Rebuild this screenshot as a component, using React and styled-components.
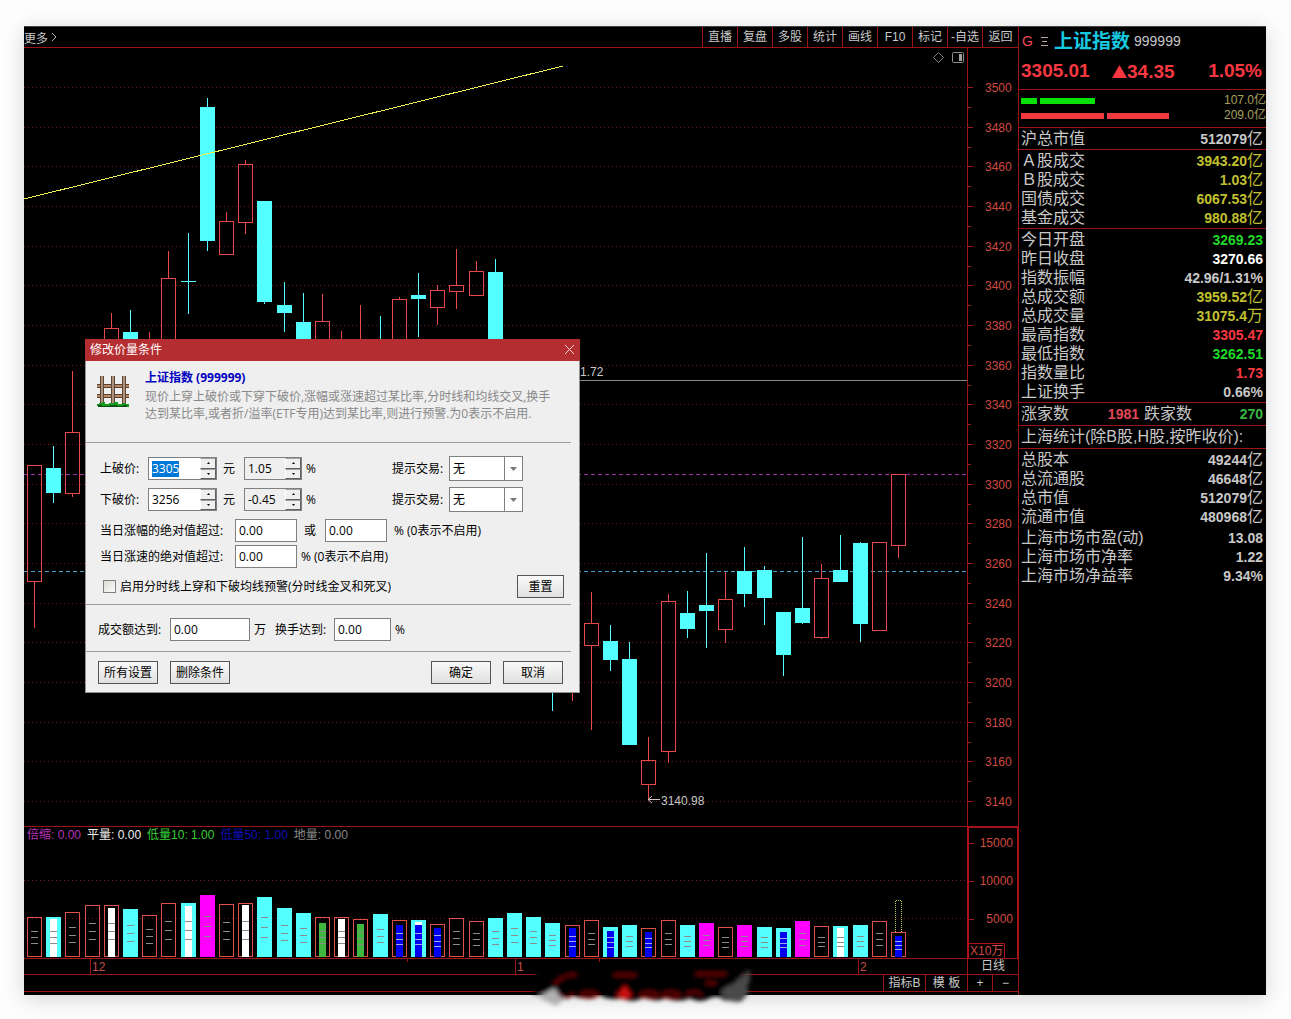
import React, { useEffect, useRef } from 'react';
import styled, { createGlobalStyle } from 'styled-components';

const GlobalStyle = createGlobalStyle`
  *, *::before, *::after {
    box-sizing: border-box;
  }

  body {
    margin: 0;
    background: #fdfdfd;
    font-family: 'Liberation Sans', 'Noto Sans CJK SC', sans-serif;
    font-size: 12px;
  }

  button, input, select {
    font: inherit;
    color: inherit;
  }
`;

const LINE = '#9c1414';

// [direction, high, top, bottom, low]
const candles = [
  ['up', 417, 417, 534, 580],
  ['down', 398, 420, 445, 455],
  ['up', 323, 384, 446, 449],
  ['up', 306, 310, 380, 380],
  ['up', 265, 280, 330, 340],
  ['down', 262, 284, 330, 340],
  ['up', 284, 300, 330, 340],
  ['up', 203, 230, 330, 340],
  ['down', 185, 233, 233, 266],
  ['down', 50, 59, 193, 203],
  ['up', 164, 173, 207, 207],
  ['up', 112, 116, 175, 186],
  ['down', 153, 153, 254, 256],
  ['down', 234, 257, 265, 284],
  ['down', 245, 274, 330, 340],
  ['up', 246, 273, 330, 340],
  ['up', 283, 310, 330, 340],
  ['up', 257, 310, 330, 340],
  ['down', 268, 310, 330, 340],
  ['up', 249, 251, 330, 340],
  ['down', 225, 247, 251, 289],
  ['up', 237, 242, 260, 277],
  ['up', 201, 237, 244, 261],
  ['up', 213, 223, 248, 248],
  ['down', 211, 224, 330, 340],
  ['down', 330, 340, 420, 430],
  ['up', 400, 420, 500, 520],
  ['down', 500, 520, 600, 663],
  ['up', 500, 520, 600, 653],
  ['up', 544, 575, 598, 682],
  ['down', 577, 593, 612, 623],
  ['down', 594, 611, 697, 697],
  ['up', 689, 712, 737, 752],
  ['up', 546, 553, 704, 715],
  ['down', 543, 565, 581, 590],
  ['down', 505, 557, 563, 600],
  ['up', 524, 551, 582, 595],
  ['down', 499, 523, 546, 559],
  ['down', 518, 522, 550, 577],
  ['down', 564, 564, 607, 628],
  ['down', 489, 560, 575, 576],
  ['up', 516, 530, 590, 591],
  ['down', 487, 522, 534, 534],
  ['down', 494, 495, 576, 594],
  ['up', 494, 494, 583, 583],
  ['up', 426, 426, 498, 510],
];

// [kind, height, inner colour, inner height, cap colour]
const volumes = [
  ['up', 40], ['down', 40, '#fff', 38], ['up', 45], ['up', 52], ['up', 52, '#fff', 49],
  ['down', 48], ['up', 42], ['up', 54], ['down', 54, '#fff', 51], ['hot', 62],
  ['up', 53], ['up', 54, '#fff', 52], ['down', 60], ['down', 49], ['down', 44],
  ['up', 40, '#40b840', 34], ['up', 40, '#fff', 38], ['up', 38, '#40b840', 33], ['down', 43], ['up', 37, '#0000f0', 32],
  ['down', 37, '#0000f0', 32, '#fff'], ['up', 33, '#0000f0', 29], ['up', 39], ['up', 36], ['down', 39],
  ['down', 44], ['down', 40], ['down', 34], ['up', 32, '#0000f0', 29], ['up', 37],
  ['down', 30, '#0000f0', 26], ['down', 32], ['up', 29, '#0000f0', 25], ['up', 37], ['down', 32],
  ['hot', 34], ['up', 30], ['hot', 32], ['down', 30], ['down', 29, '#0000f0', 25],
  ['hot', 36], ['up', 31], ['down', 31, '#fff', 29], ['down', 32], ['up', 36], ['up', 25, '#0000f0', 21],
];

const prices = Array.from({ length: 19 }, (_, i) => ({
  price: 3500 - i * 20,
  y: Math.round(39 + i * 39.67),
}));

const menu = ['直播', '复盘', '多股', '统计', '画线', 'F10', '标记', '-自选', '返回'];

const legend = [
  ['倍缩: 0.00', '#b832b8'],
  ['平量: 0.00', '#f0f0f0'],
  ['低量10: 1.00', '#38d038'],
  ['低量50: 1.00', '#1010b8'],
  ['地量: 0.00', '#888'],
];

const quoteSections = [
  [['沪总市值', '512079', '亿', '#c8c8c8']],
  [
    ['Ａ股成交', '3943.20', '亿', '#c0c030'],
    ['Ｂ股成交', '1.03', '亿', '#c0c030'],
    ['国债成交', '6067.53', '亿', '#c0c030'],
    ['基金成交', '980.88', '亿', '#c0c030'],
  ],
  [
    ['今日开盘', '3269.23', '', '#20d828'],
    ['昨日收盘', '3270.66', '', '#fff'],
    ['指数振幅', '42.96/1.31%', '', '#c8c8c8'],
    ['总成交额', '3959.52', '亿', '#c0c030'],
    ['总成交量', '31075.4', '万', '#c0c030'],
    ['最高指数', '3305.47', '', '#f83840'],
    ['最低指数', '3262.51', '', '#20d828'],
    ['指数量比', '1.73', '', '#f83840'],
    ['上证换手', '0.66%', '', '#c8c8c8'],
  ],
];

const capital = [
  ['总股本', '49244', '亿', '#c8c8c8'],
  ['总流通股', '46648', '亿', '#c8c8c8'],
  ['总市值', '512079', '亿', '#c8c8c8'],
  ['流通市值', '480968', '亿', '#c8c8c8'],
];

const ratios = [
  ['上海市场市盈(动)', '13.08', '', '#c8c8c8'],
  ['上海市场市净率', '1.22', '', '#c8c8c8'],
  ['上海市场净益率', '9.34%', '', '#c8c8c8'],
];

const Page = styled.div`
  padding: 26px 25px 24px 24px;
`;

const Window = styled.main`
  position: relative;
  display: flex;
  background: #000;
  color: #c8c8c8;
  box-shadow: 0 4px 20px rgba(0, 0, 0, 0.16);
`;

const ChartPane = styled.section`
  flex: 1;
  min-width: 0;
`;

const TopBar = styled.nav`
  display: flex;
  align-items: stretch;
  height: 22px;
  border-top: 1px solid #444;
  border-bottom: 1px solid ${LINE};
`;

const MoreButton = styled.button`
  display: flex;
  align-items: center;
  gap: 3px;
  margin-right: auto;
  padding: 0;
  border: 0;
  background: none;
  cursor: pointer;
`;

const MenuButton = styled.button`
  width: 35px;
  padding: 1px 0 0;
  border: 0;
  border-left: 1px solid ${LINE};
  background: none;
  line-height: 19px;
  white-space: nowrap;
  cursor: pointer;

  &:last-child {
    width: 36px;
  }
`;

const ChartRow = styled.div`
  display: grid;
  grid-template-columns: minmax(0, 1fr) 51px;
  grid-template-rows: minmax(0, 1fr);
  height: ${(props) => props.$height}px;
  border-bottom: 1px solid ${LINE};
`;

const Plot = styled.div`
  position: relative;
  min-width: 0;

  > svg {
    display: block;
    width: 100%;
    height: 100%;
  }
`;

const Axis = styled.div`
  border: 0 solid ${(props) => (props.$boxed ? '#b01018' : LINE)};
  border-width: ${(props) => (props.$boxed ? '1px 1px 0 2px' : '0 0 0 1px')};

  > svg {
    display: block;
    width: 100%;
    height: 100%;
  }
`;

const ChartTools = styled.div`
  position: absolute;
  top: 3px;
  right: 2px;
  display: flex;
  gap: 6px;
`;

const ToolButton = styled.button`
  display: flex;
  padding: 0;
  border: 0;
  background: none;
  cursor: pointer;
`;

const Legend = styled.div`
  position: absolute;
  top: 0;
  left: 3px;
  display: flex;
  gap: 6px;
  line-height: 16px;
  white-space: nowrap;
`;

const LegendItem = styled.span`
  color: ${(props) => props.$color};
`;

const PeriodButton = styled.button`
  padding: 0;
  border: 0;
  border-left: 1px solid ${LINE};
  background: none;
  line-height: 15px;
  cursor: pointer;
`;

const BottomBar = styled.div`
  display: flex;
  justify-content: flex-end;
  height: 17px;
  margin-bottom: 3px;
  border-bottom: 1px solid ${LINE};
`;

const BottomButton = styled.button`
  width: ${(props) => props.$width}px;
  padding: 0;
  border: 0;
  border-left: 1px solid ${LINE};
  background: none;
  line-height: 16px;
  white-space: nowrap;
  cursor: pointer;
`;

const QuotePane = styled.aside`
  flex: 0 0 248px;
  border-left: 1px solid ${LINE};
  border-top: 1px solid #444;
  font-size: 16px;
`;

const QuoteTitle = styled.header`
  display: flex;
  align-items: center;
  height: 29px;
  padding-left: 3px;
  font-size: 14px;
  line-height: 29px;
`;

const GMark = styled.span`
  width: 18px;
  color: #f04858;
`;

const StockName = styled.h1`
  margin: 0 4px 0 5px;
  color: #18c8e0;
  font-size: 19px;
`;

const PriceRow = styled.div`
  display: grid;
  grid-template-columns: 91px auto 1fr;
  height: 33px;
  padding: 0 4px 3px 2px;
  color: #f83840;
  font-size: 19px;
  font-weight: bold;
  line-height: 29px;
`;

const Change = styled.span`
  display: flex;
  align-items: center;
`;

const Percent = styled.span`
  text-align: right;
`;

const Flow = styled.div`
  padding: 3px 0 4px 2px;
  border-top: 1px solid ${LINE};
`;

const FlowRow = styled.div`
  display: flex;
  align-items: center;
  gap: 3px;
  height: 15px;
  color: #a8a060;
  font-size: 12px;
  line-height: 15px;
`;

const FlowBar = styled.span`
  width: ${(props) => props.$width}px;
  height: 6px;
  background: ${(props) => props.$color};
`;

const FlowValue = styled.span`
  margin-left: auto;
`;

const Section = styled.section`
  padding: 1px 3px ${(props) => props.$bottom || 1}px 2px;
  border-top: 1px solid ${LINE};
`;

const QuoteRow = styled.div`
  display: flex;
  justify-content: space-between;
  height: 19px;
  line-height: 19px;
  white-space: nowrap;
`;

const Rows = styled.div`
  margin-top: ${(props) => props.$top || 0}px;
`;

const QuoteValue = styled.span`
  color: ${(props) => props.$color};

  strong {
    font-size: 14px;
  }
`;

const DownCount = styled.span`
  display: flex;
  justify-content: space-between;
  width: 119px;
`;

const UpCount = styled(DownCount)`
  width: 118px;
`;

const Watermark = styled.svg`
  position: absolute;
  left: 500px;
  bottom: -16px;
`;

const Dialog = styled.form`
  position: absolute;
  top: 313px;
  left: 61px;
  width: 495px;
  border: 1px solid #909090;
  border-top: 0;
  background: #efefef;
  color: #000;
  font-family: 'Open Sans', 'Noto Sans CJK SC', sans-serif;
  font-size: 12px;
  line-height: 16px;
`;

const DialogTitle = styled.div`
  display: flex;
  align-items: center;
  justify-content: space-between;
  height: 22px;
  margin: 0 -1px;
  padding: 0 5px;
  background: #b42d31;
  color: #fff;
`;

const CloseButton = styled.button`
  display: flex;
  padding: 0 0 2px;
  border: 0;
  background: none;
  cursor: pointer;
`;

const DialogSection = styled.div`
  margin-right: 8px;
  padding: ${(props) => props.$padding};
  border-bottom: 1px solid #9c9c9c;
`;

const Intro = styled(DialogSection)`
  display: flex;
  gap: 16px;
  height: 82px;
`;

const IntroTitle = styled.h2`
  margin: 0 0 1px;
  color: #0000c0;
  font-size: 12px;
  line-height: 18px;
`;

const IntroText = styled.p`
  margin: 0;
  color: #888;
  line-height: 17px;
  white-space: nowrap;
`;

const FieldGroup = styled.div`
  display: flex;
  flex-direction: column;
  gap: ${(props) => props.$gap}px;
  margin-bottom: ${(props) => props.$bottom || 0}px;
`;

const FieldRow = styled.div`
  display: flex;
  align-items: center;
  height: 25px;
  white-space: nowrap;
`;

const FieldLabel = styled.label`
  width: ${(props) => props.$width}px;
`;

const Unit = styled.span`
  width: ${(props) => (props.$width ? `${props.$width}px` : 'auto')};
  padding-left: ${(props) => props.$pad || 4}px;
`;

const TextInput = styled.input`
  width: ${(props) => props.$width}px;
  height: 23px;
  padding: 0 3px;
  border: 1px solid #808080;
  border-radius: 0;
  background: #fff;
  outline: none;
`;

const SpinBox = styled.span`
  display: flex;
  width: ${(props) => props.$width}px;
  height: 23px;
  border: 1px solid #808080;
  background: ${(props) => (props.$muted ? '#efefef' : '#fff')};
`;

const SpinInput = styled.input`
  flex: 1;
  min-width: 0;
  padding: 0 3px;
  border: 0;
  background: transparent;
  outline: none;

  &::selection {
    background: #0078d7;
    color: #fff;
  }
`;

const SpinButtons = styled.span`
  display: grid;
  grid-template-rows: 1fr 1fr;
  width: 16px;
`;

const SpinButton = styled.button`
  display: flex;
  align-items: center;
  justify-content: center;
  padding: 0;
  border: 1px solid;
  border-color: #a0a0a0 #606060 #606060 #fff;
  background: #efefef;
`;

const SelectWrap = styled.span`
  position: relative;
  display: flex;
  width: 74px;
`;

const Select = styled.select`
  width: 100%;
  height: 25px;
  padding: 0 3px;
  border: 1px solid #808080;
  border-radius: 0;
  background: #fff;
  appearance: none;
`;

const SelectArrow = styled.span`
  position: absolute;
  top: 1px;
  right: 1px;
  bottom: 1px;
  display: flex;
  align-items: center;
  justify-content: center;
  width: 18px;
  border-left: 1px solid #808080;
  pointer-events: none;
`;

const TradeField = styled.span`
  display: flex;
  align-items: center;
  margin-left: auto;
  padding-right: 48px;
`;

const Checkbox = styled.input`
  width: 13px;
  height: 13px;
  margin: 0 4px 0 3px;
  border: 1px solid #808080;
  background: linear-gradient(135deg, #dcdcd6, #fafafa);
  appearance: none;
`;

const DialogButton = styled.button`
  width: ${(props) => props.$width || 60}px;
  height: 23px;
  margin-left: ${(props) => (props.$push ? 'auto' : 0)};
  padding: 0;
  border: 1px solid #555;
  background: linear-gradient(#fafafa, #e0e0e0);
  cursor: pointer;
`;

const ResetButton = styled(DialogButton)`
  margin-right: 7px;
`;

const DialogFooter = styled.div`
  display: flex;
  gap: 12px;
  padding: 9px 16px 8px 12px;
`;

const centre = (i) => Math.round(10 + i * 19.2);

const Candle = ({ index, data }) => {
  const [kind, high, top, bottom, low] = data;
  const x = centre(index);
  const color = kind === 'up' ? '#e84848' : '#54ffff';

  return (
    <g fill={color} shapeRendering="crispEdges">
      <rect x={x} y={high} width="1" height={top - high} />
      <rect x={x} y={bottom} width="1" height={low - bottom} />
      {kind === 'up' ? (
        <rect x={x - 6.5} y={top + 0.5} width="14" height={bottom - top - 1} fill="none" stroke={color} />
      ) : (
        <rect x={x - 7} y={top} width="15" height={Math.max(bottom - top, 1)} />
      )}
    </g>
  );
};

const VolumeBar = ({ index, data }) => {
  const [kind, height, inner, innerHeight, cap] = data;
  const x = centre(index);
  const base = 130;
  const fill = kind === 'hot' ? '#ff00ff' : '#54ffff';
  const tick = inner === '#0000f0' ? '#a8a8e0' : '#8c8c8c';

  return (
    <g shapeRendering="crispEdges">
      {kind === 'up' ? (
        <rect x={x - 6.5} y={base - height + 0.5} width="14" height={height - 1} fill="none" stroke="#e05048" />
      ) : (
        <rect x={x - 7} y={base - height} width="15" height={height} fill={fill} />
      )}
      {cap && <rect x={x - 3} y={base - height + 2} width="7" height="4" fill={cap} />}
      {inner && <rect x={x - 3} y={base - innerHeight} width="7" height={innerHeight} fill={inner} />}
      {[0.66, 0.5, 0.34].map((part) => (
        <rect key={part} x={x - 3} y={Math.round(base - height * part)} width="7" height="1" fill={tick} />
      ))}
    </g>
  );
};

const PriceChart = () => (
  <svg role="img" aria-label="日线">
    <g stroke="#701414" strokeDasharray="1 3" shapeRendering="crispEdges">
      {prices.map(({ price, y }) => (
        <line key={price} x1="0" x2="100%" y1={y + 0.5} y2={y + 0.5} />
      ))}
    </g>
    <g shapeRendering="crispEdges">
      <line x1="0" x2="100%" y1="426.5" y2="426.5" stroke="#a030a8" strokeDasharray="4 3" />
      <line x1="0" x2="100%" y1="523.5" y2="523.5" stroke="#48a0d0" strokeDasharray="4 3" />
      <line x1="500" x2="100%" y1="332.5" y2="332.5" stroke="#888" />
    </g>
    {candles.map((data, i) => (
      <Candle key={i} index={i} data={data} />
    ))}
    <line x1="0" y1="151" x2="539" y2="18" stroke="#f0f050" shapeRendering="crispEdges" />
    <g fill="#c8c8c8" fontSize="12">
      <text x="556" y="328">1.72</text>
      <text x="637" y="757">3140.98</text>
    </g>
    <path d="M624 751.5h12M628 748l-4 3.5 4 3.5" fill="none" stroke="#d8c0c0" />
  </svg>
);

const PriceAxis = () => (
  <svg fill="#d04a40" fontSize="12">
    {prices.map(({ price, y }, i) => (
      <g key={price}>
        <rect y={y} width="5" height="1" fill="#a01820" />
        {i < prices.length - 1 && <rect y={y + 20} width="3" height="1" fill="#a01820" />}
        <text x="17" y={y + 5}>{price}</text>
      </g>
    ))}
  </svg>
);

const VolumeChart = () => (
  <svg role="img" aria-label="成交量">
    <g stroke="#902020" strokeDasharray="1 3" shapeRendering="crispEdges">
      <line x1="0" x2="100%" y1="53.5" y2="53.5" />
      <line x1="0" x2="100%" y1="91.5" y2="91.5" stroke="#601010" />
    </g>
    {volumes.map((data, i) => (
      <VolumeBar key={i} index={i} data={data} />
    ))}
    <path
      d="M871.5 105V73.5h6V105"
      fill="none"
      stroke="#c8c850"
      strokeDasharray="1 1"
      shapeRendering="crispEdges"
    />
  </svg>
);

const VolumeAxis = () => (
  <svg fill="#d04a40" fontSize="12">
    {[[15, '15000'], [53, '10000'], [91, '5000']].map(([y, label]) => (
      <g key={label}>
        <rect y={y} width="5" height="1" fill="#a01820" />
        <text x="44" y={y + 4} textAnchor="end">{label}</text>
      </g>
    ))}
    <path d="M0 115.5h35.5V131" fill="none" stroke="#b01018" />
    <text x="1" y="127">X10万</text>
  </svg>
);

const DateAxis = () => (
  <svg fill="#c05048" fontSize="12">
    {[[66, '12'], [491, '1'], [834, '2']].map(([x, label]) => (
      <g key={label}>
        <rect x={x} width="1" height="15" fill={LINE} />
        <text x={x + 2} y="12">{label}</text>
      </g>
    ))}
    <rect x="383" width="1" height="3" fill={LINE} />
    <rect x="575" width="1" height="3" fill={LINE} />
  </svg>
);

const FenceIcon = () => (
  <svg width="32" height="32" viewBox="0 0 32 32" aria-hidden="true" shapeRendering="crispEdges">
    {[8, 18].map((y) => (
      <g key={y}>
        <rect x="0" y={y} width="32" height="4" fill="#59402e" />
        <rect x="0" y={y + 1} width="32" height="2" fill="#b98c69" />
      </g>
    ))}
    {[3, 14, 25].map((x) => (
      <g key={x}>
        <rect x={x} y="0" width="4" height="29" fill="#594636" />
        <rect x={x + 1} y="0" width="2" height="29" fill="#b0937c" />
      </g>
    ))}
    <path d="M0 30v-2h2v-1h3v-1h3v2h4v-1h6v-1h3v2h5v-1h3v1h3v3H1z" fill="#149c1c" />
    <path d="M1 29h4v1h8v-1h7v1h6v-1h4v2H1z" fill="#065010" />
  </svg>
);

const Smudge = () => (
  <Watermark width="240" height="50" viewBox="0 0 240 50" aria-hidden="true">
    <defs>
      <filter id="soft" x="-10%" y="-30%" width="120%" height="160%">
        <feGaussianBlur stdDeviation="2" />
      </filter>
    </defs>
    <g filter="url(#soft)">
      <path
        d="M12 6h206v30q-8 5-18 3-6-6-14-2-10 6-20 0-12 5-24 0-12 5-22-1-12 7-22 1-14 3-24-4-14 8-26 1l-12 3-8-6-18 3z"
        fill="#030202"
      />
      <path d="M14 36l16-9 10 11-8 7z" fill="#b0b0b0" />
      <path d="M196 32q6-8 12-8l18-16v13l-3 4 2 6-7 9q-10 4-22-8z" fill="#484848" />
      <g fill="none" stroke="#780808" strokeWidth="2">
        <path d="M30 24q10-12 22-10M34 32q8 10 16 0M56 34q10-6 18 0-8 6-18 0M92 34q8-6 16 0-8 6-16 0" />
        <path d="M116 34q9-6 18 0-9 6-18 0M138 34q9-6 18 0-9 6-18 0M162 34q8-6 16 0" />
        <path d="M90 14h22M172 13h30M182 22h10" />
      </g>
      <path d="M101 24l6 10-6 4-7-4z" fill="#d01010" />
    </g>
  </Watermark>
);

const Spin = ({ id, value, width, muted, label, inputRef }) => (
  <SpinBox $width={width} $muted={muted}>
    <SpinInput id={id} ref={inputRef} defaultValue={value} aria-label={label} inputMode="decimal" />
    <SpinButtons>
      <SpinButton type="button" aria-label="增加">
        <svg width="3" height="2"><path d="M0 2l1.500-2 1.500 2z" /></svg>
      </SpinButton>
      <SpinButton type="button" aria-label="减少">
        <svg width="3" height="2"><path d="M0 0h3L1.500 2z" /></svg>
      </SpinButton>
    </SpinButtons>
  </SpinBox>
);

const TradeSelect = ({ id }) => (
  <TradeField>
    <FieldLabel htmlFor={id} $width={57}>提示交易:</FieldLabel>
    <SelectWrap>
      <Select id={id} defaultValue="none">
        <option value="none">无</option>
      </Select>
      <SelectArrow>
        <svg width="7" height="4"><path d="M0 0h7L3.500 4z" fill="#777" /></svg>
      </SelectArrow>
    </SelectWrap>
  </TradeField>
);

const AlertDialog = () => {
  const firstInput = useRef(null);

  useEffect(() => {
    firstInput.current.focus();
    firstInput.current.select();
  }, []);

  return (
    <Dialog role="dialog" aria-labelledby="dialog-title" onSubmit={(e) => e.preventDefault()}>
      <DialogTitle>
        <span id="dialog-title">修改价量条件</span>
        <CloseButton type="button" aria-label="关闭">
          <svg width="11" height="11"><path d="M1 1l9 9M10 1l-9 9" stroke="#f4d0d0" /></svg>
        </CloseButton>
      </DialogTitle>

      <Intro $padding="8px 0 0 11px">
        <Rows $top={7}><FenceIcon /></Rows>
        <div>
          <IntroTitle>上证指数 (999999)</IntroTitle>
          <IntroText>
            现价上穿上破价或下穿下破价,涨幅或涨速超过某比率,分时线和均线交叉,换手
            <br />
            达到某比率,或者折/溢率(ETF专用)达到某比率,则进行预警.为0表示不启用.
          </IntroText>
        </div>
      </Intro>

      <DialogSection $padding="13px 0 5px 14px">
        <FieldGroup $gap={6} $bottom={6}>
          <FieldRow>
            <FieldLabel htmlFor="upper" $width={48}>上破价:</FieldLabel>
            <Spin id="upper" value="3305" width={69} inputRef={firstInput} />
            <Unit $pad={6} $width={27}>元</Unit>
            <Spin value="1.05" width={58} label="上破幅度" muted />
            <Unit>%</Unit>
            <TradeSelect id="upper-trade" />
          </FieldRow>
          <FieldRow>
            <FieldLabel htmlFor="lower" $width={48}>下破价:</FieldLabel>
            <Spin id="lower" value="3256" width={69} />
            <Unit $pad={6} $width={27}>元</Unit>
            <Spin value="-0.45" width={58} label="下破幅度" muted />
            <Unit>%</Unit>
            <TradeSelect id="lower-trade" />
          </FieldRow>
        </FieldGroup>
        <FieldGroup $gap={1} $bottom={5}>
          <FieldRow>
            <FieldLabel htmlFor="range-a" $width={135}>当日涨幅的绝对值超过:</FieldLabel>
            <TextInput id="range-a" defaultValue="0.00" $width={62} />
            <Unit $pad={7} $width={28}>或</Unit>
            <TextInput aria-label="或" defaultValue="0.00" $width={62} />
            <Unit $pad={7}>% (0表示不启用)</Unit>
          </FieldRow>
          <FieldRow>
            <FieldLabel htmlFor="speed" $width={135}>当日涨速的绝对值超过:</FieldLabel>
            <TextInput id="speed" defaultValue="0.00" $width={62} />
            <Unit>% (0表示不启用)</Unit>
          </FieldRow>
        </FieldGroup>
        <FieldRow>
          <Checkbox id="cross" type="checkbox" />
          <label htmlFor="cross">启用分时线上穿和下破均线预警(分时线金叉和死叉)</label>
          <ResetButton type="reset" $width={47} $push>重置</ResetButton>
        </FieldRow>
      </DialogSection>

      <DialogSection $padding="12px 0 9px 12px">
        <FieldRow>
          <FieldLabel htmlFor="amount" $width={72}>成交额达到:</FieldLabel>
          <TextInput id="amount" defaultValue="0.00" $width={80} />
          <Unit $width={25}>万</Unit>
          <FieldLabel htmlFor="turnover" $width={59}>换手达到:</FieldLabel>
          <TextInput id="turnover" defaultValue="0.00" $width={57} />
          <Unit>%</Unit>
        </FieldRow>
      </DialogSection>

      <DialogFooter>
        <DialogButton type="button">所有设置</DialogButton>
        <DialogButton type="button">删除条件</DialogButton>
        <DialogButton type="submit" $push>确定</DialogButton>
        <DialogButton type="button">取消</DialogButton>
      </DialogFooter>
    </Dialog>
  );
};

const QuoteRows = ({ rows, top }) => (
  <Rows $top={top}>
    {rows.map(([label, value, unit, color]) => (
      <QuoteRow key={label}>
        <span>{label}</span>
        <QuoteValue $color={color}>
          <strong>{value}</strong>
          {unit}
        </QuoteValue>
      </QuoteRow>
    ))}
  </Rows>
);

const QuotePanel = () => (
  <QuotePane>
    <QuoteTitle>
      <GMark>G</GMark>
      <svg width="9" height="12" aria-hidden="true">
        <path d="M1 1.500h7M2 5.500h5M1 9.500h7" stroke="#b8a8a0" />
      </svg>
      <StockName>上证指数</StockName>
      <span>999999</span>
    </QuoteTitle>
    <PriceRow>
      <span>3305.01</span>
      <Change>
        <svg width="15" height="13" aria-hidden="true"><path d="M7.500 0L15 13H0z" fill="#f83840" /></svg>
        34.35
      </Change>
      <Percent>1.05%</Percent>
    </PriceRow>
    <Flow>
      <FlowRow>
        <FlowBar $width={16} $color="#08e008" />
        <FlowBar $width={55} $color="#08e008" />
        <FlowValue>107.0亿</FlowValue>
      </FlowRow>
      <FlowRow>
        <FlowBar $width={83} $color="#f03840" />
        <FlowBar $width={62} $color="#f03840" />
        <FlowValue>209.0亿</FlowValue>
      </FlowRow>
    </Flow>
    {quoteSections.map((rows) => (
      <Section key={rows[0][0]}>
        <QuoteRows rows={rows} />
      </Section>
    ))}
    <Section $bottom={2}>
      <QuoteRow>
        <UpCount>
          涨家数
          <QuoteValue $color="#e04858"><strong>1981</strong></QuoteValue>
        </UpCount>
        <DownCount>
          跌家数
          <QuoteValue $color="#38b840"><strong>270</strong></QuoteValue>
        </DownCount>
      </QuoteRow>
    </Section>
    <Section $bottom={2}>
      <QuoteRow>上海统计(除B股,H股,按昨收价):</QuoteRow>
    </Section>
    <Section>
      <QuoteRows rows={capital} />
      <QuoteRows rows={ratios} top={2} />
    </Section>
  </QuotePane>
);

const App = () => {
  return (
    <Page>
      <GlobalStyle />
      <Window>
        <ChartPane>
          <TopBar>
            <MoreButton type="button">
              更多
              <svg width="6" height="10"><path d="M1 1l4 4-4 4" fill="none" stroke="#b0b0b0" /></svg>
            </MoreButton>
            {menu.map((item) => (
              <MenuButton key={item} type="button">{item}</MenuButton>
            ))}
          </TopBar>

          <ChartRow $height={779}>
            <Plot>
              <PriceChart />
              <ChartTools>
                <ToolButton type="button" aria-label="标注">
                  <svg width="13" height="13"><path d="M6.500 1.500l5 5-5 5-5-5z" fill="none" stroke="#808080" /></svg>
                </ToolButton>
                <ToolButton type="button" aria-label="侧栏">
                  <svg width="14" height="13">
                    <rect x="1.500" y="1.500" width="11" height="10" rx="1" fill="none" stroke="#909090" />
                    <rect x="8" y="3" width="3" height="7" fill="#a0a0a0" />
                  </svg>
                </ToolButton>
              </ChartTools>
            </Plot>
            <Axis><PriceAxis /></Axis>
          </ChartRow>

          <ChartRow $height={132}>
            <Plot>
              <VolumeChart />
              <Legend>
                {legend.map(([text, color]) => (
                  <LegendItem key={text} $color={color}>{text}</LegendItem>
                ))}
              </Legend>
            </Plot>
            <Axis $boxed><VolumeAxis /></Axis>
          </ChartRow>

          <ChartRow $height={16}>
            <Plot><DateAxis /></Plot>
            <PeriodButton type="button">日线</PeriodButton>
          </ChartRow>

          <BottomBar>
            <BottomButton type="button" $width={42}>指标B</BottomButton>
            <BottomButton type="button" $width={42}>模 板</BottomButton>
            <BottomButton type="button" $width={25}>+</BottomButton>
            <BottomButton type="button" $width={26}>−</BottomButton>
          </BottomBar>
        </ChartPane>

        <QuotePanel />
        <AlertDialog />
        <Smudge />
      </Window>
    </Page>
  );
};

export default App;
